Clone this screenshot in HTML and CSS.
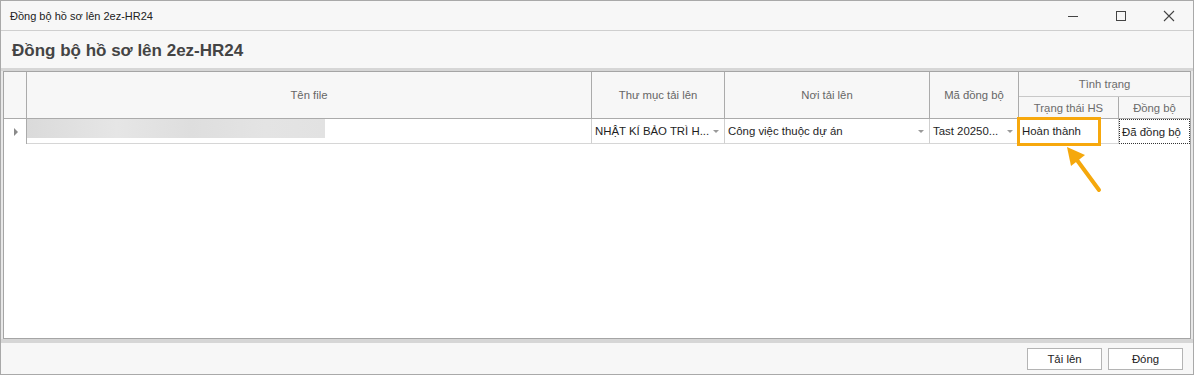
FILE: index.html
```html
<!DOCTYPE html>
<html lang="vi">
<head>
    <meta charset="UTF-8">
    <meta name="viewport" content="width=device-width, initial-scale=1.0">
    <title>Đồng bộ hồ sơ lên 2ez-HR24</title>
    <link rel="stylesheet" href="styles.css">
</head>
<body>
    <div class="window">
        <div class="titlebar">
            <span class="title">Đồng bộ hồ sơ lên 2ez-HR24</span>
            <div class="controls">
                <span class="ctl">
                    <svg width="12" height="12" viewBox="0 0 12 12"><path d="M1 6.5h10" stroke="#444" stroke-width="1"/></svg>
                </span>
                <span class="ctl">
                    <svg width="12" height="12" viewBox="0 0 12 12"><rect x="1.5" y="1.5" width="9" height="9" fill="none" stroke="#444" stroke-width="1"/></svg>
                </span>
                <span class="ctl">
                    <svg width="12" height="12" viewBox="0 0 12 12"><path d="M1 1L11 11M11 1L1 11" stroke="#444" stroke-width="1.1"/></svg>
                </span>
            </div>
        </div>

        <div class="heading">Đồng bộ hồ sơ lên 2ez-HR24</div>

        <div class="content">
            <div class="grid-box">
                <div class="grid">
                    <!-- tiêu đề cột -->
                    <div class="hd ind span2"></div>
                    <div class="hd span2">Tên file</div>
                    <div class="hd span2">Thư mục tải lên</div>
                    <div class="hd span2">Nơi tải lên</div>
                    <div class="hd span2">Mã đồng bộ</div>
                    <div class="hd band">Tình trạng</div>
                    <div class="hd sub">Trạng thái HS</div>
                    <div class="hd sub last">Đồng bộ</div>

                    <!-- dòng dữ liệu -->
                    <div class="cell ind"><span class="row-mark"></span></div>
                    <div class="cell file"><div class="blurred"></div></div>
                    <div class="cell combo"><span>NHẬT KÍ BẢO TRÌ H...</span><span class="drop"></span></div>
                    <div class="cell combo"><span>Công việc thuộc dự án</span><span class="drop"></span></div>
                    <div class="cell combo"><span>Tast 20250...</span><span class="drop"></span></div>
                    <div class="cell">Hoàn thành</div>
                    <div class="cell last focused">Đã đồng bộ</div>
                </div>

                <div class="highlight"></div>
                <svg class="pointer" width="46" height="56" viewBox="0 0 46 56">
                    <path d="M39 50L14 16" stroke="#f5a80c" stroke-width="4" stroke-linecap="round" fill="none"/>
                    <polygon points="7,7 25,15 11,26" fill="#f5a80c"/>
                </svg>
            </div>
        </div>

        <div class="footer">
            <button class="btn">Tải lên</button>
            <button class="btn">Đóng</button>
        </div>
    </div>
</body>
</html>
```

FILE: styles.css
```css
* {
    box-sizing: border-box;
}
body {
    margin: 0;
    font-family: "Liberation Sans", Arial, sans-serif;
    font-size: 11px;
    background-color: #ffffff;
}
.window {
    width: 1194px;
    height: 375px;
    border: 1px solid #a9a9a9;
    background: #f7f7f7;
    display: flex;
    flex-direction: column;
}
.titlebar {
    height: 30px;
    border-bottom: 1px solid #cfcfcf;
    display: flex;
    align-items: center;
    justify-content: space-between;
    padding-left: 9px;
    color: #222;
}
.controls {
    display: flex;
    height: 100%;
}
.ctl {
    width: 48px;
    display: flex;
    align-items: center;
    justify-content: center;
}
.ctl svg {
    display: block;
}
.heading {
    height: 40px;
    border-bottom: 3px solid #d6d6d6;
    padding: 6px 0 0 11px;
    font-size: 17px;
    font-weight: bold;
    color: #444;
    line-height: 28px;
}
.content {
    flex: 1;
    padding: 0 2px;
    background: #e8e8e8;
    display: flex;
}
.grid-box {
    position: relative;
    flex: 1;
    border: 1px solid #a5a5a5;
    background: #ffffff;
}
.grid {
    display: grid;
    grid-template-columns: 23px 565px 133px 205px 89px 100px 1fr;
    grid-template-rows: 25px 22px 25px;
}
.hd {
    background: #f7f7f7;
    border-right: 1px solid #ababab;
    border-bottom: 1px solid #ababab;
    color: #666;
    font-size: 11.3px;
    display: flex;
    align-items: center;
    justify-content: center;
}
.span2 {
    grid-row: span 2;
}
.band {
    grid-column: span 2;
    border-right: none;
    border-bottom-color: #c8c8c8;
    color: #6b6b6b;
}
.sub {
    color: #6b6b6b;
}
.last {
    border-right: none;
}
.cell {
    border-right: 1px solid #cfcfcf;
    border-bottom: 1px solid #d6d6d6;
    color: #1e1e1e;
    font-size: 11.4px;
    display: flex;
    align-items: center;
    padding: 0 3px;
    white-space: nowrap;
    overflow: hidden;
}
.cell.ind {
    border-bottom: none;
    border-right-color: #ababab;
    justify-content: center;
}
.row-mark {
    width: 0;
    height: 0;
    border-left: 4px solid #8a8a8a;
    border-top: 4px solid transparent;
    border-bottom: 4px solid transparent;
    margin-left: 2px;
}
.cell.file {
    padding: 0;
    align-items: flex-start;
}
.blurred {
    width: 298px;
    height: 19px;
    background: linear-gradient(90deg, #dadada 0%, #e6e6e6 30%, #dedede 55%, #e4e4e4 80%, #e2e2e2 100%);
}
.combo {
    justify-content: space-between;
    padding-right: 5px;
}
.drop {
    width: 0;
    height: 0;
    border-top: 3px solid #9a9a9a;
    border-left: 3px solid transparent;
    border-right: 3px solid transparent;
}
.focused {
    border: 1px dotted #333;
    padding-left: 2px;
}
.highlight {
    position: absolute;
    left: 1013px;
    top: 45px;
    width: 84px;
    height: 29px;
    border: 3px solid #f7a80d;
}
.pointer {
    position: absolute;
    left: 1056px;
    top: 68px;
}
.footer {
    height: 35px;
    border-top: 4px solid #d6d6d6;
    display: flex;
    justify-content: flex-end;
    align-items: center;
    gap: 6px;
    padding-right: 10px;
}
.btn {
    width: 75px;
    height: 22px;
    background: #ffffff;
    border: 1px solid #b4b4b4;
    font-family: "Liberation Sans", Arial, sans-serif;
    font-size: 11.4px;
    color: #222;
    padding: 0;
    cursor: pointer;
}
```
